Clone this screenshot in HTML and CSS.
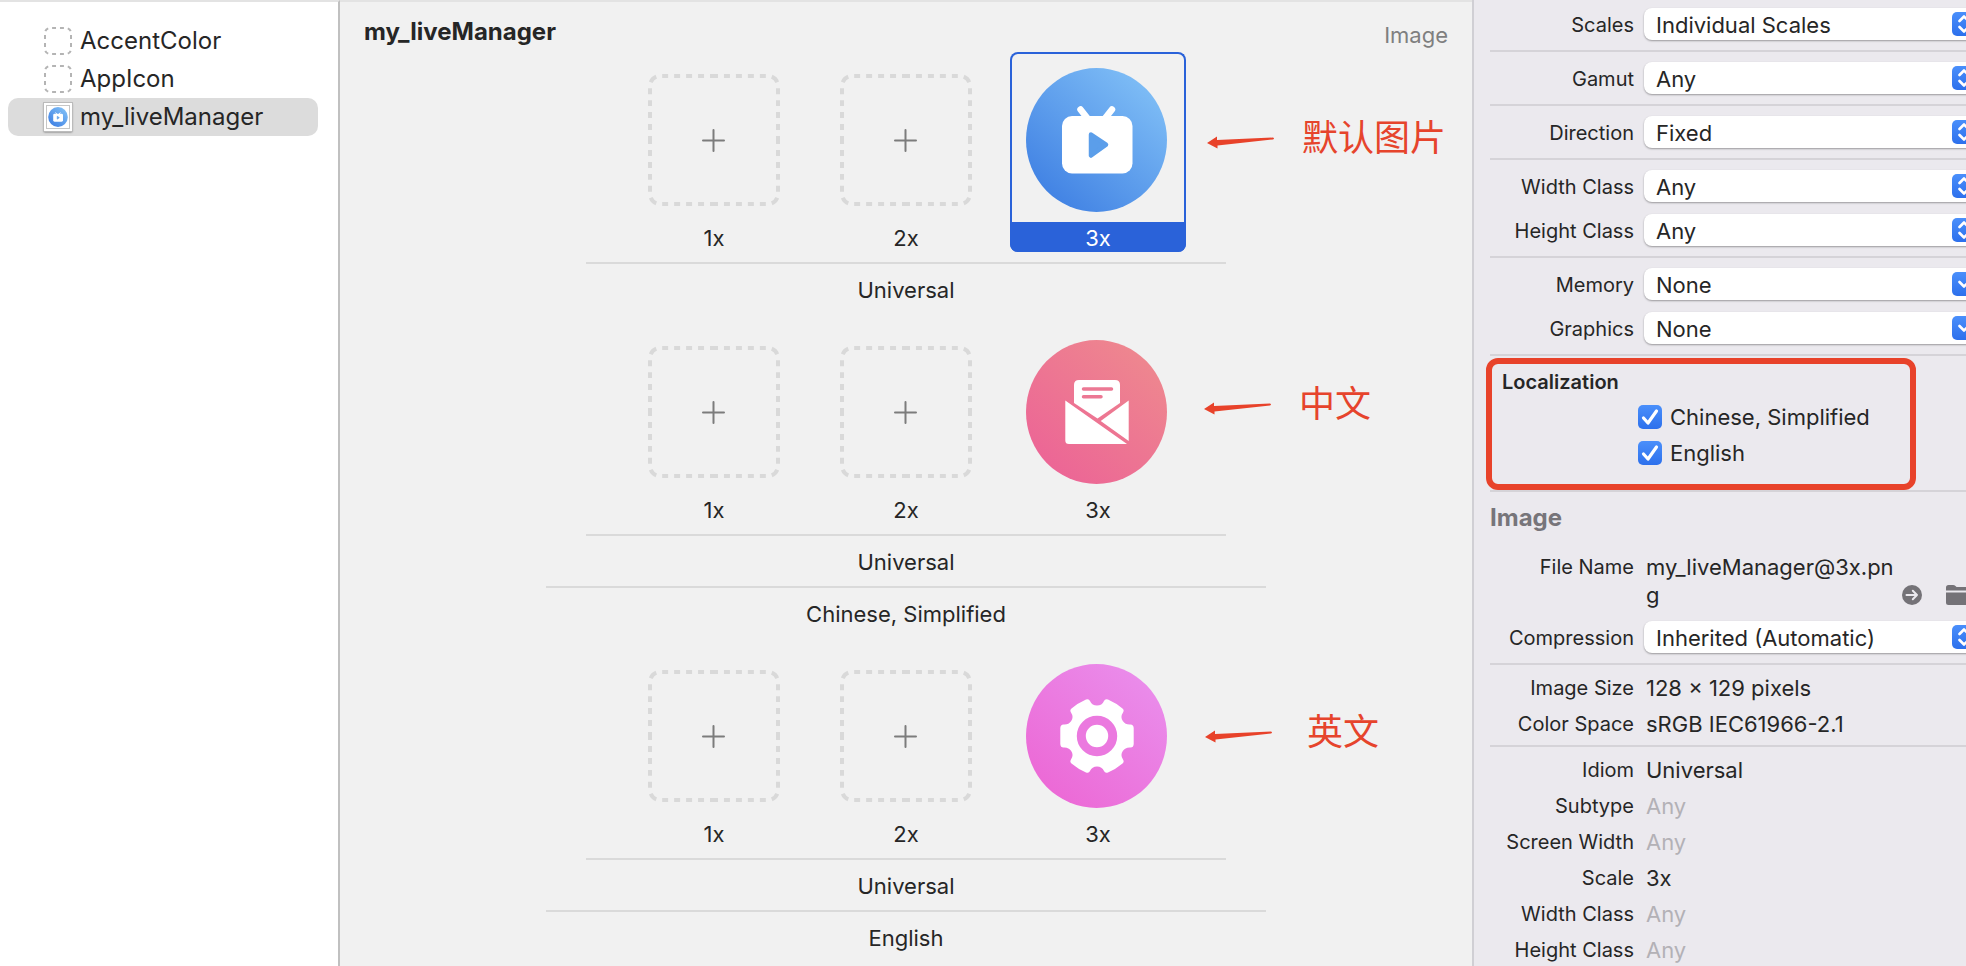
FILE: index.html
```
<!DOCTYPE html>
<html lang="en">
<head>
<meta charset="utf-8">
<title>my_liveManager</title>
<link rel="stylesheet" href="styles.css">
</head>
<body>
<svg class="defs" aria-hidden="true">
  <defs>
    <linearGradient id="blue" x1="0.1" y1="0.9" x2="0.8" y2="0.1"><stop offset="0" stop-color="#3f80e3"/><stop offset="1" stop-color="#7cbbf5"/></linearGradient>
    <linearGradient id="pink" x1="0.1" y1="0.9" x2="0.8" y2="0.1"><stop offset="0" stop-color="#ec6496"/><stop offset="1" stop-color="#ee868f"/></linearGradient>
    <linearGradient id="violet" x1="0.1" y1="0.9" x2="0.8" y2="0.1"><stop offset="0" stop-color="#ec68d5"/><stop offset="1" stop-color="#ea8bea"/></linearGradient>
    <symbol id="placeholder" viewBox="0 0 28 28">
      <path d="M14 1H22A5 5 0 0 1 27 6V22A5 5 0 0 1 22 27H6A5 5 0 0 1 1 22V6A5 5 0 0 1 6 1Z" fill="none" stroke="#b4b4b4" stroke-width="2" pathLength="96" stroke-dasharray="4 4" stroke-dashoffset="-2"/>
    </symbol>
    <symbol id="empty" viewBox="0 0 132 132">
      <path d="M66 2H120A10 10 0 0 1 130 12V120A10 10 0 0 1 120 130H12A10 10 0 0 1 2 120V12A10 10 0 0 1 12 2Z" fill="none" stroke="#d9d9d9" stroke-width="4" pathLength="496" stroke-dasharray="8 6 6 6 6 6 6 6 6 6" stroke-dashoffset="4"/>
      <path d="M55 66.500H76M65.500 56V77" fill="none" stroke="#7c7c7c" stroke-width="2" stroke-linecap="round"/>
    </symbol>
    <symbol id="tv" viewBox="0 0 141 144">
      <ellipse cx="70.500" cy="72" rx="70.500" ry="72" fill="url(#blue)"/>
      <path d="M54.500 41.500L62 51M86 41.500L78.500 51" stroke="#fff" stroke-width="6.500" stroke-linecap="round"/>
      <rect x="36" y="48" width="70.500" height="57.500" rx="10" fill="#fff"/>
      <path d="M65 66.500L80 76.700L65 87.500Z" fill="#5b9eea" stroke="#5b9eea" stroke-width="4.500" stroke-linejoin="round"/>
    </symbol>
    <symbol id="mail" viewBox="0 0 141 144">
      <ellipse cx="70.500" cy="72" rx="70.500" ry="72" fill="url(#pink)"/>
      <path d="M48 63V45Q48 40 53 40H89Q94 40 94 45V63L71.500 78.500Z" fill="#fff"/>
      <path d="M57.500 49H85.500M57.500 56.700H75" stroke="#ec7894" stroke-width="3.500" stroke-linecap="round"/>
      <path d="M39.300 60.500L101 104H43Q39.300 104 39.300 100.500ZM102.700 60.500L74.700 81L102.700 101Z" fill="#fff"/>
    </symbol>
    <symbol id="gear" viewBox="0 0 141 144">
      <ellipse cx="70.500" cy="72" rx="70.500" ry="72" fill="url(#violet)"/>
      <path d="M64 37Q66 41.500 71 41.500Q76 41.500 78 37Q79 34.500 82 35.500Q90 39 96.500 44.500Q98.500 46 97 48.500Q94 53 96.800 57Q99.500 61 104.500 60.500Q107.500 60.500 107.700 64V80Q107.500 83.500 104.500 83.500Q99.500 83 96.800 87Q94 91 97 95.500Q98.500 98 96.500 99.500Q90 105 82 108.500Q79 109.500 78 107Q76 102.500 71 102.500Q66 102.500 64 107Q63 109.500 60 108.500Q52 105 45.500 99.500Q43.500 98 45 95.500Q48 91 45.200 87Q42.500 83 37.500 83.500Q34.500 83.500 34.300 80V64Q34.500 60.500 37.500 60.500Q42.500 61 45.200 57Q48 53 45 48.500Q43.500 46 45.500 44.500Q52 39 60 35.500Q63 34.500 64 37Z" fill="#fff"/>
      <circle cx="71" cy="72" r="15.700" fill="none" stroke="#eb79df" stroke-width="9"/>
    </symbol>
    <symbol id="pointer" viewBox="0 0 68 14">
      <path d="M0 8L10 1.500V5L66 2.500Q68 3.300 66 4.500L10.500 10.500V13.500Z" fill="#e8422a"/>
    </symbol>
    <symbol id="updown" viewBox="0 0 24 24">
      <path d="M7.500 9L12 4.500L16.500 9M7.500 15L12 19.500L16.500 15" fill="none" stroke="#fff" stroke-width="2.600" stroke-linecap="round" stroke-linejoin="round"/>
    </symbol>
    <symbol id="down" viewBox="0 0 24 24">
      <path d="M7.500 10L12 14.500L16.500 10" fill="none" stroke="#fff" stroke-width="2.600" stroke-linecap="round" stroke-linejoin="round"/>
    </symbol>
    <symbol id="tick" viewBox="0 0 24 24">
      <path d="M5.500 13L10 18L18.500 6" fill="none" stroke="#fff" stroke-width="3.200" stroke-linecap="round" stroke-linejoin="round"/>
    </symbol>
  </defs>
</svg>
<div class="window">
  <nav class="sidebar" aria-label="Assets">
    <button class="asset"><svg class="asset-icon"><use href="#placeholder"/></svg>AccentColor</button>
    <button class="asset"><svg class="asset-icon"><use href="#placeholder"/></svg>AppIcon</button>
    <button class="asset selected"><span class="thumb"><svg class="thumb-image"><use href="#tv"/></svg></span>my_liveManager</button>
  </nav>

  <main class="canvas">
    <header class="canvas-head"><h1 class="title">my_liveManager</h1><span class="kind">Image</span></header>
    <div class="sets">
      <section class="set">
        <div class="slots">
          <div class="slot"><svg class="empty"><use href="#empty"/></svg><span class="scale">1x</span></div>
          <div class="slot"><svg class="empty"><use href="#empty"/></svg><span class="scale">2x</span></div>
          <div class="slot active"><svg class="filled"><use href="#tv"/></svg><span class="scale">3x</span></div>
        </div>
        <div class="caption">Universal</div>
        <div class="note note-default"><svg class="pointer"><use href="#pointer"/></svg><span lang="zh">默认图片</span></div>
      </section>
      <section class="set">
        <div class="slots">
          <div class="slot"><svg class="empty"><use href="#empty"/></svg><span class="scale">1x</span></div>
          <div class="slot"><svg class="empty"><use href="#empty"/></svg><span class="scale">2x</span></div>
          <div class="slot"><svg class="filled"><use href="#mail"/></svg><span class="scale">3x</span></div>
        </div>
        <div class="caption">Universal</div>
        <div class="caption wide">Chinese, Simplified</div>
        <div class="note note-chinese"><svg class="pointer"><use href="#pointer"/></svg><span lang="zh">中文</span></div>
      </section>
      <section class="set">
        <div class="slots">
          <div class="slot"><svg class="empty"><use href="#empty"/></svg><span class="scale">1x</span></div>
          <div class="slot"><svg class="empty"><use href="#empty"/></svg><span class="scale">2x</span></div>
          <div class="slot"><svg class="filled"><use href="#gear"/></svg><span class="scale">3x</span></div>
        </div>
        <div class="caption">Universal</div>
        <div class="caption wide">English</div>
        <div class="note note-english"><svg class="pointer"><use href="#pointer"/></svg><span lang="zh">英文</span></div>
      </section>
    </div>
  </main>

  <aside class="inspector">
    <div class="form">
      <div class="group">
        <div class="row"><label class="label" for="scales">Scales</label><span class="pop"><select id="scales"><option>Individual Scales</option></select><svg class="badge"><use href="#updown"/></svg></span></div>
      </div>
      <div class="group">
        <div class="row"><label class="label" for="gamut">Gamut</label><span class="pop"><select id="gamut"><option>Any</option></select><svg class="badge"><use href="#updown"/></svg></span></div>
      </div>
      <div class="group">
        <div class="row"><label class="label" for="direction">Direction</label><span class="pop"><select id="direction"><option>Fixed</option></select><svg class="badge"><use href="#updown"/></svg></span></div>
      </div>
      <div class="group">
        <div class="row"><label class="label" for="width">Width Class</label><span class="pop"><select id="width"><option>Any</option></select><svg class="badge"><use href="#updown"/></svg></span></div>
        <div class="row"><label class="label" for="height">Height Class</label><span class="pop"><select id="height"><option>Any</option></select><svg class="badge"><use href="#updown"/></svg></span></div>
      </div>
      <div class="group">
        <div class="row"><label class="label" for="memory">Memory</label><span class="pop"><select id="memory"><option>None</option></select><svg class="badge"><use href="#down"/></svg></span></div>
        <div class="row"><label class="label" for="graphics">Graphics</label><span class="pop"><select id="graphics"><option>None</option></select><svg class="badge"><use href="#down"/></svg></span></div>
      </div>
      <fieldset class="localization">
        <legend class="legend">Localization</legend>
        <label class="check"><span class="box"><input type="checkbox" checked><svg class="tick"><use href="#tick"/></svg></span>Chinese, Simplified</label>
        <label class="check"><span class="box"><input type="checkbox" checked><svg class="tick"><use href="#tick"/></svg></span>English</label>
      </fieldset>
      <div class="group file">
        <h2 class="heading">Image</h2>
        <div class="row top">
          <span class="label">File Name</span>
          <div class="file-value">
            <span class="file-name">my_liveManager@3x.png</span>
            <button class="tool" aria-label="Show image"><svg width="20" height="20" viewBox="0 0 20 20"><circle cx="10" cy="10" r="10" fill="#747277"/><path d="M4.500 10H15M10.800 5.800L15 10L10.800 14.200" fill="none" stroke="#ebe9ee" stroke-width="2" stroke-linecap="round" stroke-linejoin="round"/></svg></button>
            <button class="tool" aria-label="Choose folder"><svg width="26" height="20" viewBox="0 0 26 20"><path d="M0 5.500V2.500Q0 0 2.500 0H7Q8.500 0 9.500 1L10.500 2H23.500Q26 2 26 4.500V5.500ZM0 7.500H26V17.500Q26 20 23.500 20H2.500Q0 20 0 17.500Z" fill="#747277"/></svg></button>
          </div>
        </div>
        <div class="row"><label class="label" for="compression">Compression</label><span class="pop"><select id="compression"><option>Inherited (Automatic)</option></select><svg class="badge"><use href="#updown"/></svg></span></div>
      </div>
      <div class="group facts">
        <div class="fact"><span class="label">Image Size</span><span class="value">128 × 129 pixels</span></div>
        <div class="fact"><span class="label">Color Space</span><span class="value">sRGB IEC61966-2.1</span></div>
      </div>
      <div class="group facts">
        <div class="fact"><span class="label">Idiom</span><span class="value">Universal</span></div>
        <div class="fact"><span class="label">Subtype</span><span class="value dim">Any</span></div>
        <div class="fact"><span class="label">Screen Width</span><span class="value dim">Any</span></div>
        <div class="fact"><span class="label">Scale</span><span class="value">3x</span></div>
        <div class="fact"><span class="label">Width Class</span><span class="value dim">Any</span></div>
        <div class="fact"><span class="label">Height Class</span><span class="value dim">Any</span></div>
      </div>
    </div>
  </aside>
</div>
</body>
</html>
```

FILE: styles.css
```
* {
  box-sizing: border-box;
}

body {
  margin: 0;
  font: 22px/28px Inter, "Noto Sans CJK SC", sans-serif;
  color: #262626;
  background: #f1f1f1;
}

button, select, input {
  font: inherit;
  color: inherit;
  margin: 0;
}

svg {
  display: block;
}

.defs {
  position: absolute;
  width: 0;
  height: 0;
}

.window {
  display: grid;
  grid-template-columns: 340px minmax(0, 1fr) 494px;
  height: 100vh;
  overflow: hidden;
}

/* Asset list */
.sidebar {
  background: #fff;
  border-top: 2px solid #e3e3e3;
  border-right: 2px solid #c0c0c0;
  padding: 20px 20px 0 8px;
}

.asset {
  display: flex;
  align-items: center;
  gap: 8px;
  width: 100%;
  height: 38px;
  padding: 0 36px;
  border: 0;
  border-radius: 10px;
  background: none;
  font-size: 24px;
  line-height: 38px;
  text-align: left;
}

.asset.selected {
  background: #dcdcdc;
}

.asset-icon {
  width: 28px;
  height: 28px;
}

.thumb {
  display: grid;
  place-items: center;
  width: 28px;
  height: 28px;
  border: 2px solid #fff;
  background: #fff;
  box-shadow: 0 0 0 1px #bbb, 0 1px 2px #555, inset 0 0 0 1px #c6c6c6;
}

.thumb-image {
  width: 20px;
  height: 20px;
}

/* Image sets */
.canvas {
  border-top: 2px solid #e3e3e3;
  overflow: hidden;
}

.canvas-head {
  display: flex;
  justify-content: space-between;
  padding: 16px 24px 0;
  height: 50px;
}

.title {
  margin: 0;
  font-size: 24px;
  font-weight: 700;
  line-height: 28px;
}

.kind {
  color: #7f7f7f;
  line-height: 34px;
}

.sets {
  display: flex;
  flex-direction: column;
  align-items: center;
  gap: 10px;
}

.set {
  position: relative;
  width: 720px;
}

.slots {
  display: flex;
  justify-content: center;
  gap: 16px;
}

.slot {
  display: flex;
  flex-direction: column;
  align-items: center;
  justify-content: space-between;
  width: 176px;
  height: 200px;
  border: 2px solid transparent;
  border-bottom: 0;
  border-radius: 8px;
}

.slot.active {
  border-color: #2a62d9;
}

.empty {
  width: 132px;
  height: 132px;
  margin-top: 20px;
}

.filled {
  width: 141px;
  height: 144px;
  margin: 14px 3px 0 0;
}

.scale {
  width: 100%;
  height: 30px;
  line-height: 32px;
  text-align: center;
}

.active .scale {
  color: #fff;
  background: #2a62d9;
  border-radius: 0 0 6px 6px;
  box-shadow: 0 0 0 2px #2a62d9;
  clip-path: inset(0 -2px 0 -2px round 0 0 8px 8px);
}

.caption {
  width: 640px;
  margin: 10px auto 0;
  padding-top: 2px;
  border-top: 2px solid #dadada;
  line-height: 48px;
  text-align: center;
}

.caption.wide {
  width: 720px;
  margin-top: 0;
}

/* Hand-placed callouts over the image sets */
.note {
  position: absolute;
  display: flex;
  align-items: center;
  color: #e6442c;
  font-size: 36px;
  line-height: 40px;
  white-space: nowrap;
}

.note span {
  font-family: "Noto Sans CJK SC", sans-serif;
}

.pointer {
  width: 68px;
  height: 14px;
  margin-top: 14px;
}

.note-default {
  top: 63px;
  left: 661px;
  gap: 27px;
}

.note-chinese {
  top: 57px;
  left: 658px;
  gap: 27px;
}

.note-english {
  top: 61px;
  left: 659px;
  gap: 34px;
}

/* Inspector */
.inspector {
  background: #ebe9ee;
  border-left: 2px solid #d0cfd4;
  overflow: hidden;
}

.form {
  width: 520px;
  padding-left: 16px;
}

.group {
  display: flex;
  flex-direction: column;
  gap: 12px;
  padding: 10px 0;
  border-bottom: 2px solid #d5d3d8;
}

.group:first-child {
  padding-top: 8px;
}

.row, .fact {
  display: grid;
  grid-template-columns: 144px 336px;
  gap: 10px;
  align-items: center;
}

.label {
  font-size: 20px;
  text-align: right;
  white-space: nowrap;
}

label.label {
  padding-top: 2px;
}

.pop {
  position: relative;
  display: block;
}

.pop select {
  display: block;
  appearance: none;
  width: 100%;
  height: 32px;
  padding: 1px 40px 0 12px;
  border: 0;
  border-radius: 8px;
  background: #fff;
  box-shadow: 0 1px 2px rgba(0, 0, 0, 0.35);
}

.badge {
  position: absolute;
  top: 4px;
  right: 4px;
  width: 24px;
  height: 24px;
  border-radius: 5px;
  background: linear-gradient(#4a8ffb, #2d70ec);
  pointer-events: none;
}

.localization {
  display: flex;
  flex-direction: column;
  gap: 8px;
  width: 430px;
  height: 132px;
  margin: 2px 0 0 -4px;
  padding: 4px 10px;
  border: 6px solid #e8422a;
  border-radius: 12px;
}

.legend {
  float: left;
  width: 100%;
  padding: 0;
  margin-bottom: -1px;
  font-size: 20px;
  font-weight: 600;
}

.check {
  display: flex;
  align-items: center;
  gap: 8px;
  padding-left: 136px;
}

.box {
  position: relative;
  width: 24px;
  height: 24px;
}

.box input {
  display: block;
  appearance: none;
  width: 24px;
  height: 24px;
  border-radius: 5px;
  background: linear-gradient(#4a8ffb, #2d70ec);
}

.tick {
  position: absolute;
  inset: 0;
  width: 24px;
  height: 24px;
  pointer-events: none;
}

.file {
  border-top: 2px solid #d5d3d8;
}

.heading {
  margin: 2px 0 9px;
  font-size: 24px;
  font-weight: 700;
  color: #77757a;
}

.row.top {
  align-items: start;
}

.file-value {
  display: flex;
  align-items: flex-end;
  gap: 24px;
  padding-left: 2px;
}

.file-name {
  width: 251px;
  margin-right: -19px;
  word-break: break-all;
}

.tool {
  padding: 0 0 4px;
  border: 0;
  background: none;
}

.facts {
  gap: 8px;
  padding: 9px 0 7px;
}

.facts:last-child {
  border-bottom: 0;
}

.value {
  padding-left: 2px;
}

.dim {
  color: #b3b1b6;
}
```
